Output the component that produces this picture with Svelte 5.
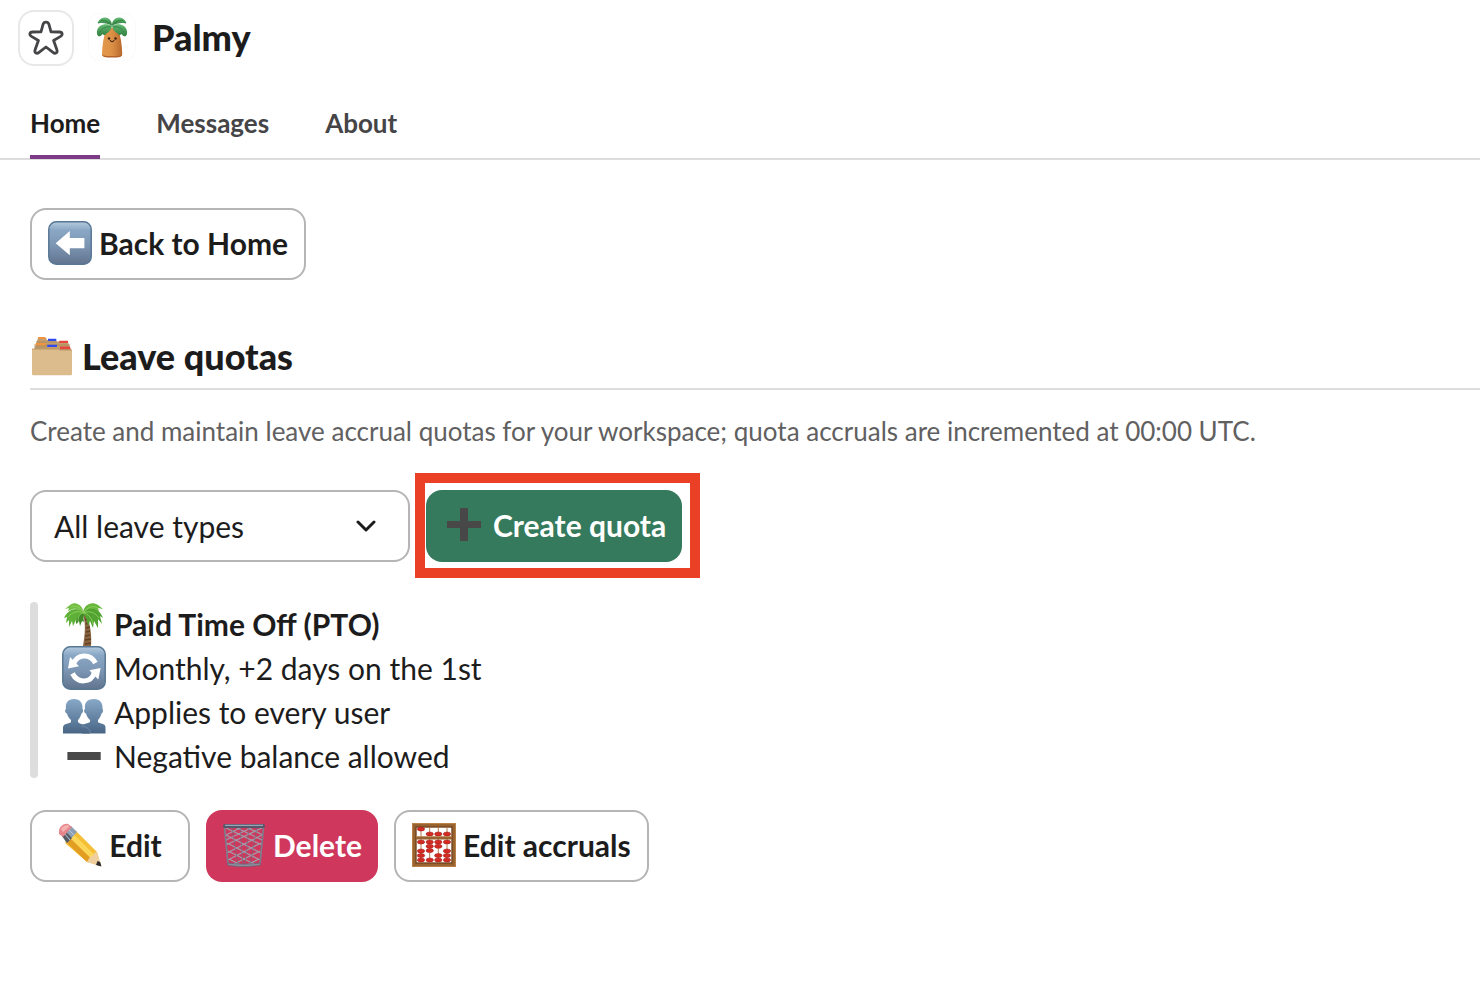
<script>
	const tabs = ["Home", "Messages", "About"];
	const leaveTypes = ["All leave types", "Paid Time Off (PTO)"];

	let activeTab = $state("Home");
	let leaveType = $state("All leave types");
	let starred = $state(false);

	const rods = [
		{ x: 9, beads: [6, 19, 28, 32.5, 37] },
		{ x: 17.7, beads: [11, 19, 23.3, 27.6, 37] },
		{ x: 26.3, beads: [11, 19, 23.3, 32.5, 37] },
		{ x: 35, beads: [11, 19, 28, 32.5, 37] },
	];
</script>

{#snippet tile(id)}
	<defs>
		<linearGradient {id} x1="0" y1="0" x2="0" y2="1">
			<stop offset="0" stop-color="#b4cadd" />
			<stop offset=".2" stop-color="#89a7c5" />
			<stop offset=".55" stop-color="#7c96b3" />
			<stop offset="1" stop-color="#62748f" />
		</linearGradient>
	</defs>
	<rect x=".8" y=".8" width="42.4" height="42.4" rx="7.5" fill="url(#{id})" stroke="#587794" stroke-width="1.5" />
{/snippet}

{#snippet backIcon()}
	<svg class="emoji" viewBox="0 0 44 44" aria-hidden="true">
		{@render tile("tileBack")}
		<path d="M7.7 22.2L21.8 10v7h14.6v10.2H21.8v7.1z" fill="#fff" />
	</svg>
{/snippet}

{#snippet repeatIcon()}
	<svg class="emoji" viewBox="0 0 44 44" aria-hidden="true">
		{@render tile("tileRepeat")}
		<g fill="none" stroke="#fff" stroke-width="5">
			<path d="M11.500 18C15 8 28 7 33.500 17" />
			<path d="M32.500 26.500C29 37 16 38 10.500 27.500" />
		</g>
		<path d="M8 11L6 22.400l11-2.100zM36.300 33.500L38.600 22 27.300 24.300z" fill="#fff" />
	</svg>
{/snippet}

{#snippet dividersIcon()}
	<svg class="emoji" viewBox="0 0 44 44" aria-hidden="true">
		<path d="M4 15L8 3h8l1 2h9l1 2h11l3 8z" fill="#c39f70" />
		<path d="M4 12h13M6 7h32M4 10h36" stroke="#a98656" stroke-width=".8" />
		<path d="M8 2h7.500v2H8zM6 8h9.500v2.300H5.500z" fill="#f09240" />
		<path d="M18 3.700h8.300v2.300H18zM17.500 9.700h9.500v2.300H17z" fill="#2f4bf0" />
		<path d="M29 5.700h9v2.300h-8.500zM30 11.500h10l.5 2.800H30z" fill="#e4473f" />
		<path d="M2 14h26l2 1h12v24.500l-1 .7H3l-1-.7z" fill="#dcbb8c" />
		<path d="M2 14h26l2 1h12" fill="none" stroke="#b48f5e" stroke-width=".8" />
	</svg>
{/snippet}

{#snippet plusIcon()}
	<svg class="emoji" viewBox="0 0 44 44" aria-hidden="true">
		<path d="M18 5h8v13h13v7H26v13h-8V25H5v-7h13z" fill="#484848" />
	</svg>
{/snippet}

{#snippet minusIcon()}
	<svg class="emoji" viewBox="0 0 44 44" aria-hidden="true">
		<rect x="5.400" y="18" width="33.300" height="8" fill="#484848" />
	</svg>
{/snippet}

{#snippet palmIcon()}
	<svg class="emoji" viewBox="0 0 44 44" aria-hidden="true">
		<path d="M21 13c3 8 2 20 0 31h8c1-12-1-23-5-32z" fill="#8a6340" />
		<path d="M23 18l3-1m-2 5l3-1m-3 5l4-1m-4 5l4-1m-5 5l5-1m-5 5l6-1m-6 5l6-1" stroke="#5f4127" stroke-width="1.400" />
		<path d="M22 10C15 5 7 6 2 16l3-1-1 6 3-3v7l3-6 1 5 3-6 1 4c2-5 4-8 7-9z" fill="#5fb038" />
		<path d="M22 10c5-7 15-5 19 6l-3-2 2 8-4-5v9l-4-7-1 7-3-7-2 5c-1-6-2-9-4-11z" fill="#52a331" />
		<path d="M22 11C20 2 13-1 8 3L3 7l4-1-1 3 5-2c4-1 8 1 11 4z" fill="#73bf43" />
		<path d="M21 11c1-9 9-12 15-8l5 4-5-1 1 3-5-2c-4-1-8 0-11 4z" fill="#68b63c" />
		<path d="M22 11c-5 1-8 5-8 11l3-3 1 5 2-5 2 1c-1-4 0-7 0-9z" fill="#3f8929" />
		<path d="M22 11C16 8 10 10 6 15m16-4c-4 0-6 4-6 8m6-8c5-3 12 0 15 5m-15-5c4 1 8 5 9 11M22 11C18 5 14 3 9 5m13 6c3-6 9-8 14-5" fill="none" stroke="#97d364" stroke-width=".8" />
	</svg>
{/snippet}

{#snippet usersIcon()}
	<svg class="emoji" viewBox="0 0 44 44" aria-hidden="true">
		<defs>
			<linearGradient id="bust" x1="0" y1="0" x2="0" y2="1">
				<stop offset="0" stop-color="#88a8c7" />
				<stop offset="1" stop-color="#486586" />
			</linearGradient>
		</defs>
		<path d="M12 9c6 0 9 4 8.500 10 1.200 1 .5 4-1 4.500-.8 3-2 5-3.500 6.500v2c2 3 11 2 12 7v4.500H1V37c1-4 6-3 8-5v-2C7 28 5.500 26 5 23.500 3 23 2.500 20 4 19 3 13 6 9 12 9z" fill="url(#bust)" />
		<path d="M32 9c6 0 9 4 8.500 10 1.200 1 .5 4-1 4.500-.8 3-2 5-3.500 6.500v2c2 2 7 1 7.500 5v6.500H20V36c1-3 6-2 8-4v-2c-2-2-3.500-4-4-6.500-2-.5-2.500-3.500-1-4.500-1-6 2-10 9-10z" fill="url(#bust)" />
		<path d="M20 36c5 1 8 3 8 7" fill="none" stroke="#7897b6" stroke-width=".7" />
	</svg>
{/snippet}

{#snippet pencilIcon()}
	<svg class="emoji" viewBox="0 0 44 44" aria-hidden="true">
		<path d="M12 15l5-8 22 22 4 14-14-4L7 20z" fill="#f4bf35" />
		<path d="M15 10.500l22 22-4 3.500-23-22z" fill="#fcd658" />
		<path d="M7 18l22 21 4-3.500L11 14z" fill="#e29e22" />
		<path d="M29 39l3-5 3-1 1-3 3-1 4.400 14.500z" fill="#efcf9e" />
		<path d="M38 42l1.500-4 2.700 1 1.200 4.500z" fill="#2c2c2c" />
		<path d="M4 13L13 3l6 6-10 11z" fill="#8c9fb5" />
		<path d="M4 13l4-4 6 6-5 5z" fill="#555a63" />
		<path d="M10 6l6 6M6 10l6 7" stroke="#bccbdc" stroke-width="1" />
		<path d="M1 8c0-4 5-8 9-7l4 3-9 10-4-3z" fill="#e6868c" />
		<path d="M3 6c2-3 4-4 7-4l1 2-6 5z" fill="#f4b1b2" />
	</svg>
{/snippet}

{#snippet trashIcon()}
	<svg class="emoji" viewBox="0 0 44 44" aria-hidden="true">
		<g fill="none" stroke="#a29caa" stroke-width="1.300">
			<path d="M4 5l36 17M4 12l35 18M5 20l33 17M6 28l28 14M7 36l12 6M13 4l27 13M24 4l17 8" />
			<path d="M40 5L4 22M40 12L5 30M39 20L6 37M38 28L10 42M37 36l-12 6M31 4L4 17M20 4L4 12" />
		</g>
		<path d="M10 4l6 38M18 4l3 38M27 4l-4 38M35 4l-7 38" fill="none" stroke="#716b80" stroke-width=".7" />
		<path d="M2.500 4L6 41M41.500 4L38 41" fill="none" stroke="#7d7c8d" stroke-width="1.700" />
		<rect x="1" y="1" width="42" height="4" rx="2" fill="#55586a" />
		<path d="M3 2.300h38" stroke="#9ea4b6" stroke-width="1.300" />
		<path d="M5.500 40c9 1.500 24 1.500 33 0v2c-8 2-25 2-33 0z" fill="#8f91a1" stroke="#5f6172" stroke-width=".7" />
	</svg>
{/snippet}

{#snippet abacusIcon()}
	<svg class="emoji" viewBox="0 0 44 44" aria-hidden="true">
		<rect x="2.200" y="2.200" width="39.600" height="39.600" fill="none" stroke="#986330" stroke-width="4.400" />
		<rect x=".5" y=".5" width="43" height="43" fill="none" stroke="#b98146" />
		<rect x="4" y="4" width="36" height="36" fill="none" stroke="#633b17" />
		{#each rods as rod}
			<path d="M{rod.x} 4v36" stroke="#b57b4d" stroke-width="1" />
			{#each rod.beads as y}
				<ellipse cx={rod.x} cy={y} rx="3.700" ry="2" fill="#d42a22" stroke="#9c211c" stroke-width=".5" />
			{/each}
		{/each}
		<path d="M4 15h36" stroke="#986330" stroke-width="3" />
		<path d="M4 13.500h36" stroke="#bd8950" stroke-width=".7" />
	</svg>
{/snippet}

<header>
	<button class="star" aria-label="Star Palmy" aria-pressed={starred} onclick={() => (starred = !starred)}>
		<svg viewBox="0 0 36 36" aria-hidden="true">
			<path
				d="M15 4.500C16 1.300 20 1.300 21 4.500L23 11.900 31.500 12C34.600 12.200 35 15 32.600 16.400L25.600 20.500 28.800 29.500C30 32.800 27.300 34.300 25 32.400L18 27 11 32.400C8.700 34.300 6 32.800 7.200 29.500L10.400 20.500 3.400 16.400C1 15 1.400 12.200 4.500 12L13 11.900z"
				fill={starred ? "#e8a400" : "none"}
				stroke="#454447"
				stroke-width="2.800"
				stroke-linejoin="round"
			/>
		</svg>
	</button>
	<svg class="logo" viewBox="0 0 48 48" aria-hidden="true">
		<defs>
			<linearGradient id="trunk">
				<stop offset="0" stop-color="#e39a4d" />
				<stop offset=".5" stop-color="#db9046" />
				<stop offset="1" stop-color="#b8692c" />
			</linearGradient>
			<linearGradient id="leaf" x1="0" y1="0" x2="0" y2="1">
				<stop offset="0" stop-color="#64bb72" />
				<stop offset="1" stop-color="#2f7d40" />
			</linearGradient>
		</defs>
		<rect x=".5" y=".5" width="47" height="47" rx="11" fill="none" stroke="#fafafa" />
		<path d="M18 15h12c2.500 8 4.200 17 4.200 26 0 3-3 3-10 3s-10.200 0-10.200-3c0-9 2-18 4-26z" fill="url(#trunk)" />
		<path d="M14 41c1 2 4 2 10 2s9 0 10.200-2c0 3-3 3.500-10 3.500S14 44 14 41z" fill="#b3622b" />
		<path d="M24 13c-6-4-14-1-15 5-.5 3 .5 5 2 5.500 1.500-.5 2.500-1 3.500-2.500 1 1.500 2.500 1.500 4-.5 3-2 5-4 5.500-7.500z" fill="url(#leaf)" />
		<path d="M24 13c6-4 14-1 15 5 .5 3-.5 5-2 5.500-1.500-.5-2.500-1-3.500-2.500-1 1.500-2.500 1.500-4-.5-3-2-5-4-5.500-7.500z" fill="url(#leaf)" />
		<path d="M24 12.500C24 4 15 2 11 7.500c-1.500 2-1.500 3-.5 3 4-1 9 0 13.500 2z" fill="url(#leaf)" />
		<path d="M24 12.500C24 4 33 2 37 7.500c1.500 2 1.500 3 .5 3-4-1-9 0-13.500 2z" fill="url(#leaf)" />
		<path d="M24 12.500C21 9 17 7 13 7.500M24 12.500c3-3.500 7-5.500 11-5M23 14c-4-1-9 1-11 5M25 14c4-1 9 1 11 5" fill="none" stroke="#2f7d40" stroke-width=".8" />
		<circle cx="21" cy="25.500" r="1.200" fill="#3a2114" />
		<circle cx="27.500" cy="25.500" r="1.200" fill="#3a2114" />
		<path d="M22.300 27.500c1 1.500 2.600 1.500 3.600 0" fill="none" stroke="#3a2114" stroke-width="1.100" stroke-linecap="round" />
	</svg>
	<h1>Palmy</h1>
</header>

<nav>
	{#each tabs as tab}
		<button class="tab" class:active={activeTab === tab} onclick={() => (activeTab = tab)}>{tab}</button>
	{/each}
</nav>

<main>
	<button class="btn">{@render backIcon()}Back to Home</button>

	<h2>{@render dividersIcon()}Leave quotas</h2>
	<p class="description">
		Create and maintain leave accrual quotas for your workspace; quota accruals are incremented at 00:00 UTC.
	</p>

	<div class="row">
		<div class="selectHolder">
			<select aria-label="Leave type" bind:value={leaveType}>
				{#each leaveTypes as type}
					<option>{type}</option>
				{/each}
			</select>
			<svg class="chevron" viewBox="0 0 20 12" aria-hidden="true">
				<path d="M2 2l8 8 8-8" fill="none" stroke="#1d1c1d" stroke-width="3" stroke-linecap="round" stroke-linejoin="round" />
			</svg>
		</div>
		<div class="highlight">
			<button class="btn primary">{@render plusIcon()}Create quota</button>
		</div>
	</div>

	<div class="quota">
		<ul>
			<li>{@render palmIcon()}<strong>Paid Time Off (PTO)</strong></li>
			<li>{@render repeatIcon()}Monthly, +2 days on the 1st</li>
			<li>{@render usersIcon()}Applies to every user</li>
			<li>{@render minusIcon()}Negative balance allowed</li>
		</ul>
	</div>

	<div class="row">
		<button class="btn">{@render pencilIcon()}Edit</button>
		<button class="btn danger">{@render trashIcon()}Delete</button>
		<button class="btn">{@render abacusIcon()}Edit accruals</button>
	</div>
</main>

<style>
	:global(body) {
		margin: 0;
		background: #fff;
		color: #1d1c1d;
		font-family: Lato, "Open Sans", sans-serif;
		font-size: 30px;
	}

	* {
		box-sizing: border-box;
	}

	button,
	select {
		font-family: inherit;
		color: inherit;
		cursor: pointer;
	}

	header {
		display: flex;
		align-items: center;
		padding: 10px 18px 39px;
	}

	.star {
		display: flex;
		align-items: center;
		justify-content: center;
		width: 56px;
		height: 56px;
		padding: 0;
		border: 2px solid #e8e8e8;
		border-radius: 16px;
		background: #fff;
	}

	.star svg {
		width: 36px;
		height: 36px;
	}

	.logo {
		width: 48px;
		height: 48px;
		margin: 0 16px 2px 14px;
	}

	h1,
	h2 {
		margin: 0;
		font-family: "Lato Black", Lato, "Open Sans", sans-serif;
		font-size: 36px;
		font-weight: 900;
		line-height: 42px;
	}

	h1 {
		padding-bottom: 2px;
	}

	nav {
		display: flex;
		gap: 56px;
		padding-left: 30px;
		border-bottom: 2px solid #dddddd;
	}

	.tab {
		margin-bottom: -1px;
		padding: 0 0 14px;
		border: 0;
		border-bottom: 4px solid transparent;
		background: none;
		color: #454447;
		font-size: 26px;
		font-weight: 700;
		line-height: 36px;
	}

	.tab.active {
		border-bottom-color: #7c3a87;
		color: #1d1c1d;
	}

	main {
		padding: 48px 0 48px 30px;
	}

	.emoji {
		flex: none;
		width: 44px;
		height: 44px;
	}

	.btn {
		display: flex;
		align-items: center;
		justify-content: center;
		gap: 7px;
		min-width: 160px;
		height: 72px;
		padding: 0 16px 2px;
		border: 2px solid #b5b5b5;
		border-radius: 16px;
		background: #fff;
		font-size: 30px;
		font-weight: 700;
		line-height: 44px;
	}

	.primary,
	.danger {
		border: 0;
		color: #fff;
	}

	.primary {
		background: #357a5c;
	}

	.danger {
		background: #cf375c;
	}

	h2 {
		display: flex;
		gap: 8px;
		margin-top: 55px;
		padding-bottom: 9px;
		border-bottom: 2px solid #dddddd;
	}

	.description {
		margin: 21px 0 39px;
		color: #616061;
		font-size: 26px;
		line-height: 40px;
	}

	.row {
		display: flex;
		flex-wrap: wrap;
		gap: 16px;
	}

	/* select and chevron share one grid cell */
	.selectHolder {
		display: grid;
		align-items: center;
		width: 380px;
	}

	select {
		grid-area: 1 / 1;
		width: 100%;
		height: 72px;
		padding: 0 60px 0 22px;
		border: 2px solid #b5b5b5;
		border-radius: 16px;
		background: #fff;
		font-size: 30px;
		appearance: none;
	}

	.chevron {
		grid-area: 1 / 1;
		justify-self: end;
		width: 20px;
		height: 12px;
		margin-right: 34px;
		pointer-events: none;
	}

	.highlight {
		position: relative;
	}

	.highlight::after {
		content: "";
		position: absolute;
		inset: -17px -18px -16px -11px;
		border: 10px solid #ea4025;
		pointer-events: none;
	}

	.quota {
		display: flex;
		gap: 24px;
		margin: 40px 0 32px;
	}

	.quota::before {
		content: "";
		width: 8px;
		border-radius: 4px;
		background: #dddddd;
	}

	ul {
		margin: 0;
		padding: 0;
		list-style: none;
	}

	li {
		display: flex;
		gap: 8px;
		line-height: 44px;
	}
</style>
